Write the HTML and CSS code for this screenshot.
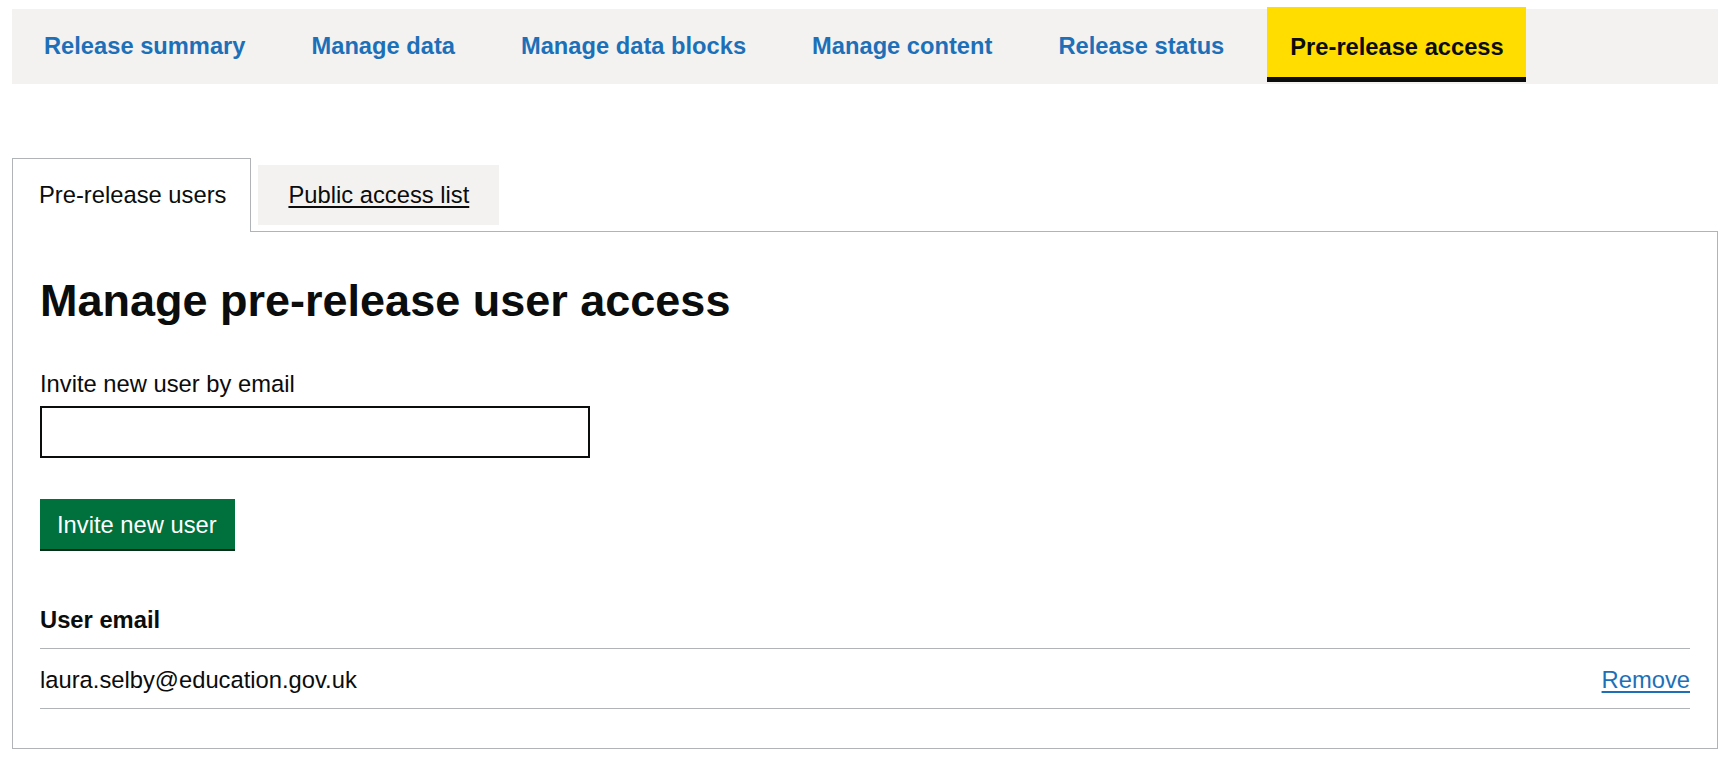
FILE: index.html
```html
<!DOCTYPE html>
<html lang="en">
<head>
<meta charset="utf-8">
<title>Pre-release access</title>
<link rel="stylesheet" href="styles.css">
</head>
<body>
<div class="page">
  <nav class="nav">
    <ul class="nav-list">
      <li class="nav-item"><a class="nav-link" href="#">Release summary</a></li>
      <li class="nav-item"><a class="nav-link" href="#">Manage data</a></li>
      <li class="nav-item"><a class="nav-link" href="#">Manage data blocks</a></li>
      <li class="nav-item"><a class="nav-link" href="#">Manage content</a></li>
      <li class="nav-item"><a class="nav-link" href="#">Release status</a></li>
      <li class="nav-item nav-item--active"><a class="nav-link nav-link--active" href="#">Pre-release access</a></li>
    </ul>
  </nav>

  <div class="tabs">
    <ul class="tabs-list">
      <li class="tab tab--selected">Pre-release users</li>
      <li class="tab tab--plain"><a class="tab-link" href="#">Public access list</a></li>
    </ul>
    <section class="panel">
      <h1 class="heading">Manage pre-release user access</h1>
      <div class="form-group">
        <label class="label" for="email">Invite new user by email</label>
        <input class="input" id="email" type="email">
      </div>
      <button class="button" type="button">Invite new user</button>
      <table class="table">
        <thead>
          <tr><th class="cell cell--head">User email</th><th class="cell cell--head"></th></tr>
        </thead>
        <tbody>
          <tr>
            <td class="cell">laura.selby@education.gov.uk</td>
            <td class="cell cell--right"><a class="link" href="#">Remove</a></td>
          </tr>
        </tbody>
      </table>
    </section>
  </div>
</div>
</body>
</html>
```

FILE: styles.css
```css
* { box-sizing: border-box; }

html, body {
  margin: 0;
  padding: 0;
  background: #ffffff;
}

body {
  font-family: "Liberation Sans", Arial, sans-serif;
  font-size: 23.75px;
  line-height: 31px;
  color: #0b0c0c;
}

.page {
  padding: 9px 15px 0 12px;
}

/* Top navigation */
.nav {
  background: #f3f2f1;
  height: 75px;
}

.nav-list {
  display: flex;
  align-items: flex-start;
  list-style: none;
  margin: 0;
  padding: 0 0 0 9px;
  height: 75px;
}

.nav-item {
  margin-right: 20px;
}

.nav-link {
  display: block;
  padding: 0 23px;
  line-height: 75px;
  font-weight: 700;
  font-size: 23.7px;
  color: #1d70b8;
  text-decoration: none;
}

.nav-item--active {
  margin-top: -2px;
}

.nav-link--active {
  background: #ffdd00;
  color: #0b0c0c;
  padding: 10px 22px 0 23px;
  line-height: 60px;
  border-bottom: 5px solid #0b0c0c;
}

/* Tabs */
.tabs {
  margin-top: 74px;
}

.tabs-list {
  display: flex;
  align-items: flex-start;
  list-style: none;
  margin: 0;
  padding: 0;
}

.tab {
  line-height: 31px;
}

.tab--selected {
  position: relative;
  z-index: 1;
  background: #ffffff;
  border: 1px solid #b1b4b6;
  border-bottom: 0;
  padding: 20px 24px 22px 26px;
  margin-bottom: -1px;
}

.tab--plain {
  margin-top: 7px;
  margin-left: 7px;
  background: #f3f2f1;
  padding: 14px 30px 15px;
}

.tab-link {
  color: #0b0c0c;
  text-decoration: underline;
  text-decoration-thickness: 2px;
  text-underline-offset: 3px;
}

.panel {
  border: 1px solid #b1b4b6;
  padding: 44px 27px 39px;
}

.heading {
  margin: 0 0 42px;
  font-size: 45px;
  line-height: 50px;
  font-weight: 700;
}

.form-group {
  margin-bottom: 41px;
}

.label {
  display: block;
  margin-bottom: 7px;
}

.input {
  display: block;
  width: 550px;
  height: 52px;
  border: 2px solid #0b0c0c;
  border-radius: 0;
  font: inherit;
  padding: 5px;
  background: #fff;
}

.button {
  display: block;
  margin: 0 0 40px;
  height: 50px;
  padding: 10px 18px 9px 17px;
  border: 0;
  border-radius: 0;
  background: #00703c;
  box-shadow: 0 2px 0 #002d18;
  color: #ffffff;
  font-family: inherit;
  font-size: 23.75px;
  line-height: 31px;
}

.table {
  width: 100%;
  border-collapse: collapse;
  border-spacing: 0;
}

.cell {
  padding: 15px 0 13px;
  border-bottom: 1px solid #b1b4b6;
  text-align: left;
  line-height: 31px;
  font-weight: 400;
}

.cell--head {
  font-weight: 700;
}

.cell--right {
  text-align: right;
}

.link {
  color: #1d70b8;
  text-decoration: underline;
  text-decoration-thickness: 2px;
  text-underline-offset: 3px;
}
```
